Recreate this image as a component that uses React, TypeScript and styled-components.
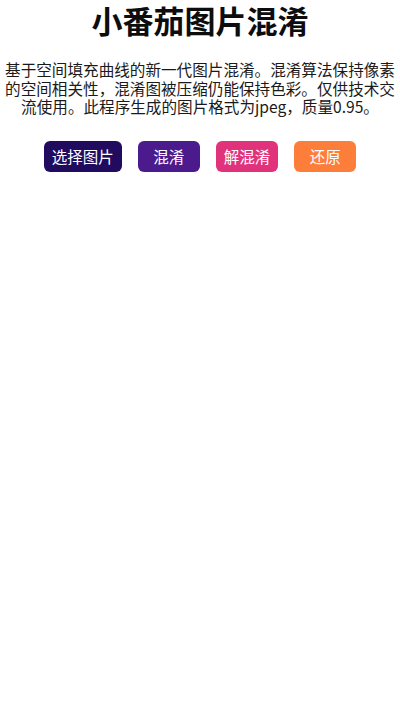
import React from "react";
import styled, { createGlobalStyle } from "styled-components";

const Global = createGlobalStyle`
  html, body { margin: 0; padding: 0; background: #ffffff; }
  body { font-family: "Noto Sans CJK SC", "Noto Sans", sans-serif; color: #111; }
`;

const Page = styled.main`
  display: flex;
  flex-direction: column;
  align-items: center;
  padding: 0 4px;
`;

const Title = styled.h1`
  margin: 0;
  font-size: 31px;
  line-height: 40px;
  font-weight: 700;
  color: #0d0d0d;
  text-align: center;
`;

const Desc = styled.p`
  margin: 20px 0 0;
  font-size: 15.6px;
  line-height: 18.5px;
  color: #1a1a1a;
  text-align: center;
`;

const Toolbar = styled.div`
  display: flex;
  gap: 16px;
  margin-top: 25px;
  justify-content: center;
`;

const Button = styled.button<{ $bg: string }>`
  min-width: 62px;
  height: 31px;
  padding: 0 8px;
  border: none;
  border-radius: 6px;
  background: ${(p) => p.$bg};
  color: #ffffff;
  font-family: "Noto Sans CJK SC", "Noto Sans", sans-serif;
  font-size: 15.5px;
  line-height: 31px;
  cursor: pointer;
`;

export default function App() {
  return (
    <>
      <Global />
      <Page>
        <Title>小番茄图片混淆</Title>
        <Desc>
          基于空间填充曲线的新一代图片混淆。混淆算法保持像素的空间相关性，混淆图被压缩仍能保持色彩。仅供技术交流使用。此程序生成的图片格式为jpeg，质量0.95。
        </Desc>
        <Toolbar>
          <Button $bg="#210b5f">选择图片</Button>
          <Button $bg="#4b1a8c">混淆</Button>
          <Button $bg="#e0337b">解混淆</Button>
          <Button $bg="#fd7d3b">还原</Button>
        </Toolbar>
      </Page>
    </>
  );
}
